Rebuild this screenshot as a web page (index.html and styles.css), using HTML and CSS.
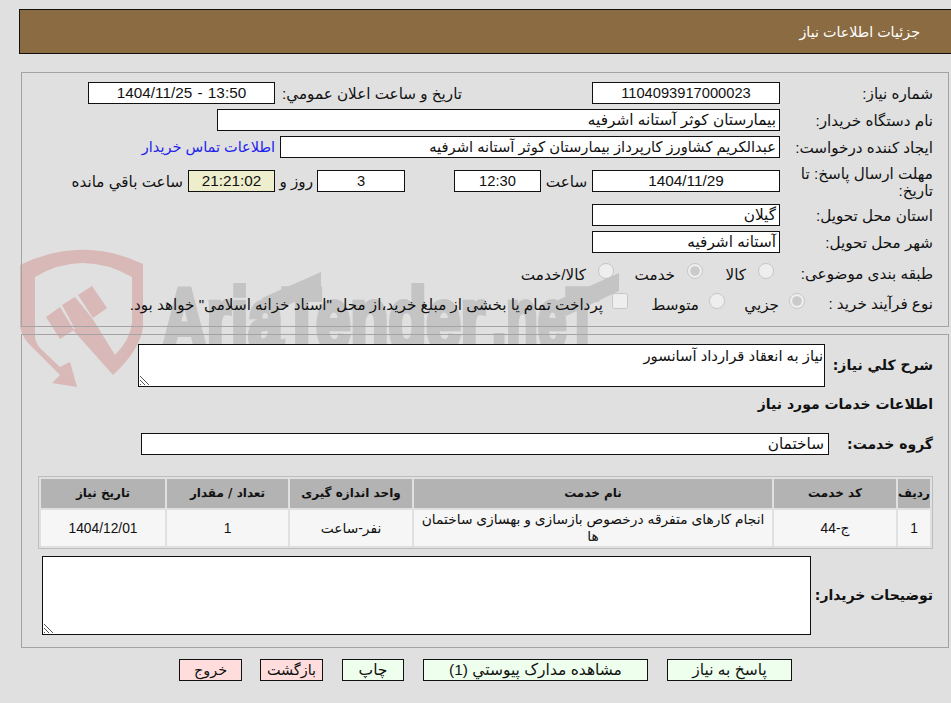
FILE: index.html
```html
<!DOCTYPE html>
<html lang="fa" dir="rtl">
<head>
<meta charset="utf-8">
<title>جزئیات اطلاعات نیاز</title>
<link rel="stylesheet" href="styles.css">
</head>
<body>
<svg class="watermark" width="640" height="150" viewBox="0 0 640 150" aria-hidden="true">
  <path class="wm-red" d="M20 15 Q82 -15 143 14 L143 77 Q140 100 113 125 L73 80 L92 68 L115 105 Q130 90 132 73 L132 27 Q82 -1 35 27 L35 87 Q36 95 42 100 L60 117 L70 112 L77 137 L52 133 L60 125 L33 98 Q22 88 20 77 Z"/>
  <polygon class="wm-red" points="46,67 60,57 74,80 60,89"/>
  <polygon class="wm-red" points="62,55 75,47 92,68 75,79"/>
  <polygon class="wm-red" points="78,45 92,36 107,58 93,68"/>
  <text class="wm-text" x="162" y="99" textLength="323" lengthAdjust="spacingAndGlyphs">AriaTender</text>
  <text class="wm-text" x="492" y="99" textLength="106" lengthAdjust="spacingAndGlyphs">.neT</text>
  <polygon class="wm-gray" points="262,48 321,22 321,40 268,64"/>
  <polygon class="wm-gray" points="558,50 619,23 619,41 566,66"/>
</svg>

<header class="title-bar">جزئیات اطلاعات نیاز</header>

<section class="panel panel-top">
  <div class="row">
    <span class="label">شماره نیاز:</span>
    <span class="field w-188 center">1104093917000023</span>
    <span class="label-public">تاریخ و ساعت اعلان عمومي:</span>
    <span class="field w-187 center ltr f-wide">1404/11/25 - 13:50</span>
  </div>
  <div class="row">
    <span class="label">نام دستگاه خریدار:</span>
    <span class="field w-563 f-wide">بیمارستان کوثر آستانه اشرفیه</span>
  </div>
  <div class="row">
    <span class="label">ایجاد کننده درخواست:</span>
    <span class="field w-500">عبدالکریم کشاورز کارپرداز بیمارستان کوثر آستانه اشرفیه</span>
    <a class="contact" href="#">اطلاعات تماس خریدار</a>
  </div>
  <div class="row row-deadline">
    <span class="label label-wrap">مهلت ارسال پاسخ: تا تاریخ:</span>
    <span class="field w-188 center f-wide">1404/11/29</span>
    <span class="unit unit-time">ساعت</span>
    <span class="field w-87 center">12:30</span>
    <span class="gap-49"></span>
    <span class="field w-88 center">3</span>
    <span class="unit unit-day">روز و</span>
    <span class="field field-timer center f-wide">21:21:02</span>
    <span class="unit unit-left">ساعت باقي مانده</span>
  </div>
  <div class="row">
    <span class="label">استان محل تحویل:</span>
    <span class="field w-188 f-wide">گیلان</span>
  </div>
  <div class="row">
    <span class="label">شهر محل تحویل:</span>
    <span class="field w-188 f-wide">آستانه اشرفیه</span>
  </div>
  <div class="row row-options">
    <span class="label">طبقه بندی موضوعی:</span>
    <label class="opt opt-goods"><input type="radio" name="cat" disabled><span>کالا</span></label>
    <label class="opt opt-service"><input type="radio" name="cat" checked disabled><span>خدمت</span></label>
    <label class="opt"><input type="radio" name="cat" disabled><span>کالا/خدمت</span></label>
  </div>
  <div class="row row-options">
    <span class="label label-process">نوع فرآیند خرید :</span>
    <label class="opt opt-small"><input type="radio" name="proc" checked disabled><span>جزیي</span></label>
    <label class="opt opt-medium"><input type="radio" name="proc" disabled><span>متوسط</span></label>
    <label class="opt opt-check"><input type="checkbox" disabled><span>پرداخت تمام یا بخشی از مبلغ خرید،از محل "اسناد خزانه اسلامی" خواهد بود.</span></label>
  </div>
</section>

<section class="panel panel-bottom">
  <div class="row row-summary">
    <span class="label-strong">شرح كلي نیاز:</span>
    <div class="area area-summary">نیاز به انعقاد قرارداد آسانسور<svg class="grip" width="11" height="11" viewBox="0 0 11 11"><path d="M1 1 L10 10 M1 5 L6 10 M1 9 L2 10"/></svg></div>
  </div>
  <h2 class="section-title">اطلاعات خدمات مورد نیاز</h2>
  <div class="row row-group">
    <span class="label-strong label-group">گروه خدمت:</span>
    <span class="field field-group">ساختمان</span>
  </div>
  <table class="items">
    <thead>
      <tr>
        <th class="c-idx">ردیف</th>
        <th class="c-code">کد خدمت</th>
        <th class="c-name">نام خدمت</th>
        <th class="c-unit">واحد اندازه گیری</th>
        <th class="c-qty">تعداد / مقدار</th>
        <th class="c-date">تاریخ نیاز</th>
      </tr>
    </thead>
    <tbody>
      <tr>
        <td>1</td>
        <td>ج-44</td>
        <td class="name-cell">انجام کارهای متفرقه درخصوص بازسازی و بهسازی ساختمان ها</td>
        <td>نفر-ساعت</td>
        <td>1</td>
        <td>1404/12/01</td>
      </tr>
    </tbody>
  </table>
  <div class="row row-notes">
    <span class="label-strong label-notes">توضیحات خریدار:</span>
    <div class="area area-notes"><svg class="grip" width="11" height="11" viewBox="0 0 11 11"><path d="M1 1 L10 10 M1 5 L6 10 M1 9 L2 10"/></svg></div>
  </div>
</section>

<nav class="actions">
  <button class="btn btn-green w-125" type="button">پاسخ به نیاز</button>
  <button class="btn btn-green w-225" type="button">مشاهده مدارک پیوستي (1)</button>
  <button class="btn btn-green w-62" type="button">چاپ</button>
  <button class="btn btn-red w-63" type="button">بازگشت</button>
  <button class="btn btn-red w-63b" type="button">خروج</button>
</nav>
</body>
</html>
```
FILE: styles.css
```css
* { box-sizing: border-box; }
html, body { margin: 0; padding: 0; }
body {
  width: 951px;
  height: 703px;
  overflow: hidden;
  position: relative;
  background: #e0e0e0;
  color: #111;
  font-family: "Liberation Sans", "DejaVu Sans", sans-serif;
  font-size: 15.2px;
  line-height: 17px;
  padding-top: 9px;
}
.watermark { position: absolute; left: 0; top: 250px; z-index: 0; direction: ltr; overflow: visible; }
.wm-red { fill: #d9b8b8; }
.wm-gray { fill: #c4c4c4; }
.wm-text {
  fill: #c4c4c4;
  stroke: #c4c4c4;
  stroke-width: 6;
  font-family: "Liberation Sans", sans-serif;
  font-weight: 700;
  font-size: 88px;
}
.title-bar {
  position: relative;
  z-index: 1;
  margin: 0 0 0 19px;
  height: 45px;
  background: #8b6b42;
  border: 1px solid #111;
  border-right: 0;
  color: #fff;
  font-size: 14.3px;
  line-height: 44px;
  padding-right: 31px;
}
.panel {
  position: relative;
  z-index: 1;
  margin-left: 21px;
  margin-right: 2px;
  border: 1px solid #a3a3a3;
}
.panel-top { margin-top: 18px; height: 255px; padding: 9px 15px 0 0; }
.panel-bottom { margin-top: 7px; height: 314px; padding: 9px 15px 0 0; }
.row { display: flex; align-items: center; margin-bottom: 5px; height: 22px; }
.label { width: 153px; flex: none; padding-top: 1px; }
.label-process { width: 128px; }
.field {
  display: block;
  flex: none;
  height: 22px;
  background: #fff;
  border: 1px solid #111;
  padding: 0 3px;
  font-size: 14.7px;
  line-height: 20px;
  white-space: nowrap;
  overflow: hidden;
}
.center { text-align: center; }
.ltr { direction: ltr; word-spacing: 1px; }
.field.f-wide { font-size: 15.3px; }
.w-188 { width: 188px; }
.w-187 { width: 187px; }
.w-563 { width: 563px; }
.w-500 { width: 500px; }
.w-87 { width: 87px; }
.w-88 { width: 88px; }
.label-public { width: 317px; flex: none; padding-right: 130px; padding-top: 1px; white-space: nowrap; }
.contact { color: #2222ee; font-size: 14.5px; text-decoration: none; margin-right: 5px; white-space: nowrap; }
.row-deadline { margin-top: 12px; margin-bottom: 12px; }
.unit { flex: none; text-align: center; white-space: nowrap; padding-top: 1px; }
.unit-time { width: 51px; }
.unit-day { width: 42px; text-align: right; padding-right: 4px; }
.unit-left { margin-right: 5px; }
.gap-49 { width: 49px; flex: none; }
.field-timer { width: 87px; background: #eeeecc; }
.row-options { align-items: flex-start; margin-top: 8px; margin-bottom: 8px; }
.row-options .label { padding-top: 4px; }
.opt { display: flex; align-items: flex-start; white-space: nowrap; }
.opt input { margin: 2px 0 0 12px; width: 16px; height: 16px; flex: none; }
.opt span { padding-top: 5px; }
.opt-goods { width: 77px; padding-right: 6px; }
.opt-service { width: 89px; }
.opt-small { width: 80px; }
.opt-small input { margin-left: 10px; }
.opt-medium { width: 97px; }
.opt-medium input { margin-left: 10px; }
.opt-check input { margin-left: 9px; }
.row-summary { height: 43px; margin-bottom: 0; }
.label-strong { font-weight: 700; font-size: 14px; flex: none; white-space: nowrap; font-family: "DejaVu Sans", sans-serif; }
.row-summary .label-strong { width: 108px; }
.area {
  position: relative;
  flex: none;
  background: #fff;
  border: 1px solid #111;
  padding: 3px 1px;
  font-size: 14.8px;
}
.area-summary { width: 687px; height: 43px; }
.area-notes { width: 769px; height: 79px; margin-right: 5px; }
.grip { position: absolute; left: 0; bottom: 0; display: block; }
.grip path { stroke: #555; stroke-width: 1; fill: none; }
.section-title { margin: 7px 0 0; font-size: 14px; font-weight: 700; line-height: 20px; font-family: "DejaVu Sans", sans-serif; }
.row-group { margin-top: 19px; margin-bottom: 0; }
.label-group { width: 104px; }
.field.field-group { width: 688px; font-size: 15.3px; padding-right: 4px; }
.items {
  margin: 21px 0 0 0;
  width: 895px;
  border-collapse: separate;
  border-spacing: 2px;
  border: 1px solid #bdbdbd;
  table-layout: fixed;
  font-size: 13.8px;
}
.items th { background: #b3b3b3; height: 29px; padding: 0; font-size: 12px; font-weight: 700; text-align: center; font-family: "DejaVu Sans", sans-serif; }
.items td { background: #f6f6f6; height: 36px; padding: 0 4px; text-align: center; vertical-align: middle; }
.c-idx { width: 32px; }
.c-code { width: 122px; }
.c-name { width: 358px; }
.c-unit { width: 122px; }
.c-qty { width: 121px; }
.c-date { width: 124px; }
.row-notes { height: 79px; margin: 7px 0 0 0; }
.label-notes { width: 117px; }
.actions { position: relative; z-index: 1; display: flex; margin: 11px 159px 0 0; }
.btn {
  flex: none;
  height: 22px;
  padding: 0;
  border: 1px solid #111;
  font-family: inherit;
  font-size: 15.5px;
  line-height: 20px;
  color: #111;
}
.btn-green { background: #eeffee; }
.btn-red { background: #ffdddd; font-size: 14.4px; }
.w-125 { width: 125px; }
.w-225 { width: 225px; margin-right: 19px; }
.w-62 { width: 62px; margin-right: 19px; }
.w-63 { width: 63px; margin-right: 19px; }
.w-63b { width: 63px; margin-right: 18px; }
```
